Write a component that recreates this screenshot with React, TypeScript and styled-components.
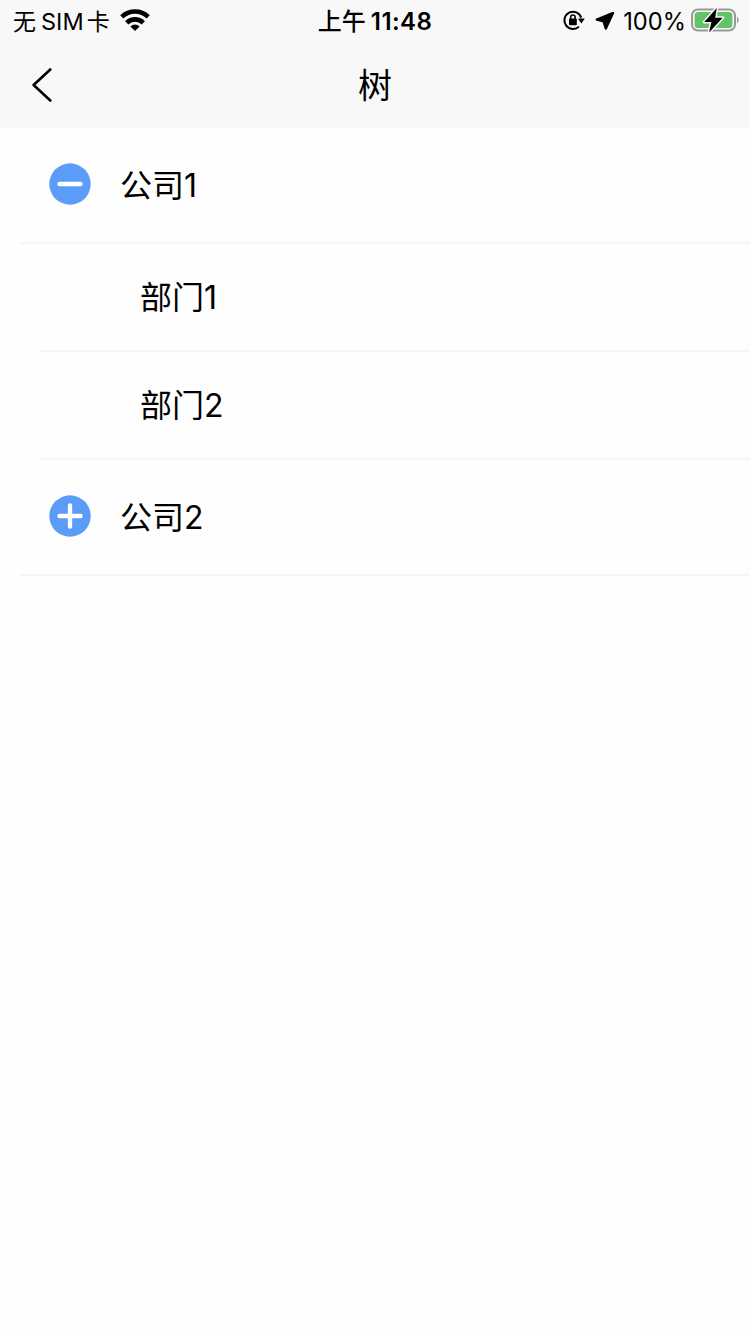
import React from "react";
import styled, { createGlobalStyle } from "styled-components";

const GlobalStyle = createGlobalStyle`
  * { box-sizing: border-box; }
  body {
    margin: 0;
    background: #fff;
    color: #000;
    font-family: Inter, "Noto Sans CJK SC", sans-serif;
  }
`;

const Screen = styled.div`
  width: 750px;
  height: 1334px;
  overflow: hidden;
  background: #fefefe;
`;

const Header = styled.header`
  height: 128px;
  background: #f8f8f8;
`;

const StatusBar = styled.div`
  display: grid;
  grid-template-columns: 1fr auto 1fr;
  align-items: center;
  height: 40px;
  padding: 0 11px 0 13px;
  font-size: 24px;
  line-height: 36px;
  white-space: nowrap;
`;

const StatusText = styled.span`
  padding-top: 3px;
`;

const Carrier = styled.div`
  display: flex;
  align-items: center;
`;

const CarrierHan = styled(StatusText)`
  font-size: 23px;
`;

const SimText = styled(StatusText)`
  margin: 0 3px 0 5px;
  font-size: 23.5px;
`;

const WifiIcon = styled.svg`
  margin-left: 10px;
`;

const Clock = styled.div`
  display: flex;
  gap: 5px;
  padding-right: 2px;
  font-weight: 600;
  letter-spacing: 0.4px;
`;

const ClockPeriod = styled(StatusText)`
  font-weight: 500;
  letter-spacing: 0;
`;

const Indicators = styled.div`
  display: flex;
  align-items: center;
  justify-content: flex-end;
`;

const LocationIcon = styled.svg`
  margin: 2px 8px 0 10px;
`;

const Percent = styled(StatusText)`
  margin-right: 5px;
  font-size: 23.7px;
  letter-spacing: 0;
`;

const NavBar = styled.nav`
  display: grid;
  grid-template-columns: 100px 1fr 100px;
  align-items: center;
  height: 88px;
`;

const BackButton = styled.button`
  display: flex;
  align-items: center;
  height: 88px;
  padding: 2px 0 0 30px;
  border: 0;
  background: none;
`;

const Title = styled.h1`
  margin: 0;
  padding-top: 3px;
  font-size: 34px;
  font-weight: 400;
  line-height: 85px;
  text-align: center;
`;

const Tree = styled.ul`
  margin: 0;
  padding: 0;
  list-style: none;
`;

const Row = styled.li<{ $level: number }>`
  display: flex;
  align-items: center;
  gap: 29px;
  height: ${({ $level }) => ($level === 0 ? 116 : 108)}px;
  margin-left: ${({ $level }) => ($level + 1) * 20}px;
  padding-left: ${({ $level }) => ($level === 0 ? 29 : 100)}px;
  padding-bottom: 2px;
  border-bottom: 2px solid #f6f6f6;
`;

const Label = styled.span`
  padding-top: 3px;
  font-size: 32px;
  line-height: 48px;
`;

const Toggle = ({ open }: { open: boolean }) => (
  <svg width="42" height="42" viewBox="0 0 42 42">
    <circle cx="21" cy="21" r="20.7" fill="#5a9cf8" />
    <path
      d={open ? "M10.5 21H31.5" : "M10.5 21H31.5M21 10.5V31.5"}
      stroke="#fff"
      strokeWidth="4.4"
      strokeLinecap="round"
    />
  </svg>
);

interface TreeNode {
  name: string;
  open?: boolean;
  children?: TreeNode[];
}

const nodes: TreeNode[] = [
  { name: "公司1", open: true, children: [{ name: "部门1" }, { name: "部门2" }] },
  { name: "公司2", open: false },
];

export default function App() {
  return (
    <Screen>
      <GlobalStyle />
      <Header>
        <StatusBar>
          <Carrier>
            <CarrierHan>无</CarrierHan>
            <SimText>SIM</SimText>
            <CarrierHan>卡</CarrierHan>
            <WifiIcon width="30" height="22" viewBox="0 0 30 22">
              <g fill="none" stroke="#000" strokeWidth="4.6">
                <path d="M1.8 7.8a19 19 0 0 1 26.4 0" />
                <path d="M6.7 13.8a11.8 11.8 0 0 1 16.6 0" />
              </g>
              <path d="M15 22l-4.6-4.5a6.4 6.4 0 0 1 9.2 0z" />
            </WifiIcon>
          </Carrier>
          <Clock>
            <ClockPeriod>上午</ClockPeriod>
            <StatusText>11:48</StatusText>
          </Clock>
          <Indicators>
            <svg width="22" height="22" viewBox="0 0 22 22">
              <path d="M16 17.6A8.6 8.6 0 1 1 18.2 8.6" fill="none" stroke="#000" strokeWidth="2" />
              <path d="M15 9.4h6.8l-3.4 5z" />
              <rect x="6" y="9.4" width="7.8" height="6.8" rx="0.8" />
              <path d="M7.7 10V8.2a2.2 2.2 0 0 1 4.4 0V10" fill="none" stroke="#000" strokeWidth="1.6" />
            </svg>
            <LocationIcon width="20" height="18" viewBox="0 0 20 18">
              <path
                d="M18 1L1.8 7.6L8.6 9.3L10.8 16.4Z"
                stroke="#000"
                strokeWidth="2.4"
                strokeLinejoin="round"
              />
            </LocationIcon>
            <Percent>100%</Percent>
            <svg width="48" height="26" viewBox="0 0 48 26">
              <rect x="1" y="2.5" width="43" height="21" rx="6" fill="none" stroke="#999" strokeWidth="2" />
              <rect x="3.6" y="5" width="37.8" height="16" rx="3.6" fill="#62c466" />
              <path d="M46 9.4q3.4 3.6 0 7.2z" fill="#999" />
              <path
                d="M25.8 1L13.2 14.9H20.4L18.1 25.4L31.7 10.7H24.2Z"
                stroke="#f8f8f8"
                strokeWidth="3"
                strokeLinejoin="round"
                paintOrder="stroke"
              />
            </svg>
          </Indicators>
        </StatusBar>
        <NavBar>
          <BackButton aria-label="返回">
            <svg width="24" height="36" viewBox="0 0 24 36">
              <path
                d="M20.3 2.5L3.6 18L20.3 33.5"
                fill="none"
                stroke="#000"
                strokeWidth="2.6"
                strokeLinecap="round"
                strokeLinejoin="round"
              />
            </svg>
          </BackButton>
          <Title>树</Title>
        </NavBar>
      </Header>
      <Tree>
        {nodes.map((node) => (
          <React.Fragment key={node.name}>
            <Row $level={0}>
              <Toggle open={!!node.open} />
              <Label>{node.name}</Label>
            </Row>
            {node.open &&
              node.children?.map((child) => (
                <Row $level={1} key={child.name}>
                  <Label>{child.name}</Label>
                </Row>
              ))}
          </React.Fragment>
        ))}
      </Tree>
    </Screen>
  );
}
